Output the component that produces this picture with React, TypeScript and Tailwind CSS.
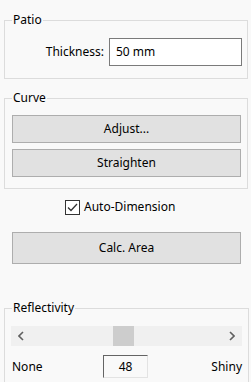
import React from "react";

function GroupBox({ title, className, children }: { title: string; className?: string; children: React.ReactNode }) {
  return (
    <fieldset className={"ml-[4px] w-[244px] border border-[#dcdcdc] pl-[7px] pr-[6px] " + (className ?? "")}>
      <legend className="px-[1px] text-[12px] leading-[16px] text-black">{title}</legend>
      {children}
    </fieldset>
  );
}

function Button({ label, className }: { label: string; className?: string }) {
  return (
    <div
      className={
        "flex items-center justify-center border border-[#adadad] bg-[#e1e1e1] text-[12px] text-black " + (className ?? "")
      }
    >
      {label}
    </div>
  );
}

export default function App() {
  return (
    <div
      className="h-[382px] w-[251px] overflow-hidden bg-[#f9f9f9] text-black"
      style={{ fontFamily: '"Noto Sans", "Open Sans", sans-serif' }}
    >
      {/* Patio */}
      <GroupBox title="Patio" className="mt-[12px] pb-[12px]">
        <div className="mt-[10px] flex items-center justify-end pr-[0px]">
          <span className="text-[12px]">Thickness:</span>
          <div className="ml-[5px] mr-[-1px] flex h-[28px] w-[133px] items-center border border-[#7a7a7a] bg-white pl-[6px] text-[12px]">
            50 mm
          </div>
        </div>
      </GroupBox>

      {/* Curve */}
      <GroupBox title="Curve" className="mt-[11px] pb-[11px]">
        <div className="mt-[9px] flex flex-col gap-[6px]">
          <Button label="Adjust..." className="h-[28px] w-[229px]" />
          <Button label="Straighten" className="h-[28px] w-[229px]" />
        </div>
      </GroupBox>

      {/* Auto-Dimension */}
      <div className="mt-[9px] flex items-center pl-[65px]">
        <div className="flex h-[15px] w-[15px] items-center justify-center border border-[#333333] bg-white">
          <svg width="11" height="9" viewBox="0 0 11 9">
            <path d="M1 4.5 L4 7.5 L10 1" fill="none" stroke="#333333" strokeWidth="1.3" />
          </svg>
        </div>
        <span className="ml-[4px] text-[12px]">Auto-Dimension</span>
      </div>

      <Button label="Calc. Area" className="ml-[12px] mt-[16px] h-[32px] w-[229px]" />

      {/* Reflectivity */}
      <GroupBox title="Reflectivity" className="mt-[36px] pb-[10px]">
        <div className="-ml-px mt-[10px] flex h-[20px] w-[231px] items-center bg-[#f0f0f0]">
          <div className="flex w-[20px] items-center justify-center">
            <svg width="6" height="10" viewBox="0 0 6 10">
              <path d="M5 1 L1 5 L5 9" fill="none" stroke="#606060" strokeWidth="1.6" />
            </svg>
          </div>
          <div className="ml-[82px] h-[20px] w-[21px] bg-[#cdcdcd]" />
          <div className="flex-1" />
          <div className="flex w-[20px] items-center justify-center">
            <svg width="6" height="10" viewBox="0 0 6 10">
              <path d="M1 1 L5 5 L1 9" fill="none" stroke="#606060" strokeWidth="1.6" />
            </svg>
          </div>
        </div>
        <div className="mt-[9px] flex items-center text-[12px]">
          <span className="w-[91px]">None</span>
          <div className="flex h-[23px] w-[45px] items-center justify-center border border-b-[#e3e3e3] border-l-[#646464] border-r-[#e3e3e3] border-t-[#646464]">
            48
          </div>
          <span className="ml-auto">Shiny</span>
        </div>
      </GroupBox>
    </div>
  );
}
